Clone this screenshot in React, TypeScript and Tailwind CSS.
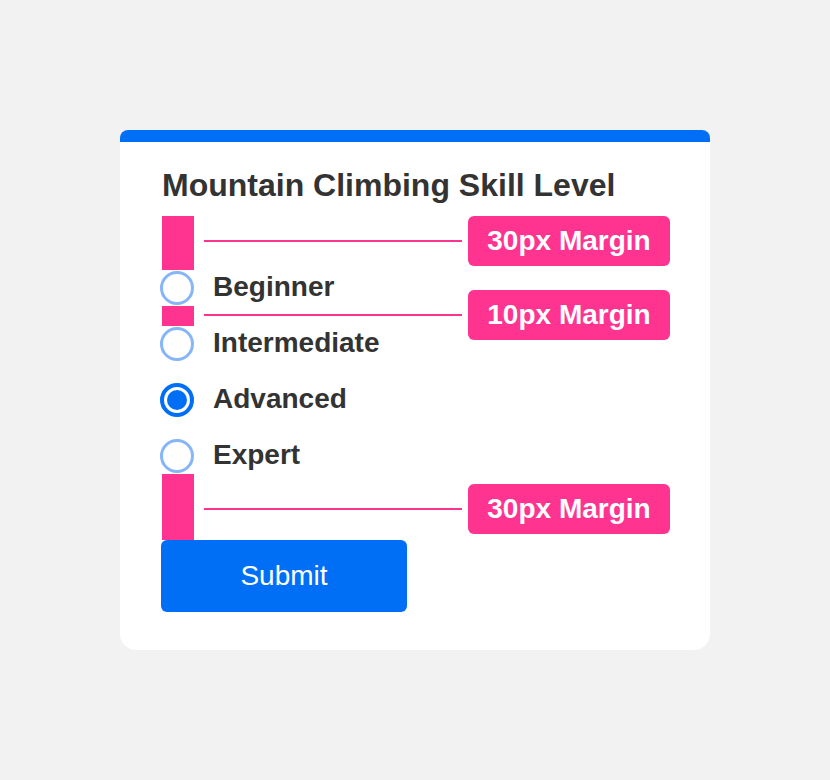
import { useState } from "react";

const levels = ["Beginner", "Intermediate", "Advanced", "Expert"];

/** Pink spacer block with a guide line and a label pill hanging off to the right. */
function Spacer({ h, shift, label }: { h: string; shift: string; label: string }) {
  return (
    <div className="flex items-center">
      <div className={`ml-[2px] w-8 shrink-0 bg-[#ff3390] ${h}`} />
      <div className={`flex h-0 flex-1 items-center ${shift}`}>
        <div className="ml-[10px] h-[2px] flex-1 bg-[#ff3390]" />
        <div className="ml-[6px] flex h-[50px] w-[202px] items-center justify-center rounded-[6px] bg-[#ff3390] text-[28px] font-bold text-white">
          {label}
        </div>
      </div>
    </div>
  );
}

function Radio({ label, checked, onSelect }: { label: string; checked: boolean; onSelect: () => void }) {
  return (
    <label className="flex h-9 cursor-pointer items-center" onClick={onSelect}>
      {checked ? (
        <span className="flex h-[34px] w-[34px] items-center justify-center rounded-full border-[4px] border-[#006ff5]">
          <span className="h-[20px] w-[20px] rounded-full bg-[#006ff5]" />
        </span>
      ) : (
        <span className="h-[34px] w-[34px] rounded-full border-[3px] border-[#86b6f8]" />
      )}
      <span className="ml-[19px] pb-[3px] text-[28px] font-bold leading-[33px] text-[#333]">{label}</span>
    </label>
  );
}

export default function App() {
  const [level, setLevel] = useState("Advanced");

  return (
    <div className="flex min-h-screen items-center justify-center bg-[#f2f2f2] font-['Liberation_Sans',Arial,sans-serif]">
      <div className="w-[590px] overflow-hidden rounded-t-[8px] rounded-b-[16px] bg-white">
        <div className="h-3 bg-[#006ff5]" />
        <div className="flex flex-col px-10 pb-[38px] pt-[25px]">
          <h2 className="mb-[13px] ml-[2px] text-[32px] font-bold leading-[36px] text-[#333]">Mountain Climbing Skill Level</h2>
          <Spacer h="h-[54px]" shift="-translate-y-[2px]" label="30px Margin" />
          <Radio label={levels[0]} checked={level === levels[0]} onSelect={() => setLevel(levels[0])} />
          <Spacer h="h-[20px]" shift="-translate-y-px" label="10px Margin" />
          <div className="flex flex-col gap-5">
            {levels.slice(1).map((l) => (
              <Radio key={l} label={l} checked={level === l} onSelect={() => setLevel(l)} />
            ))}
          </div>
          <Spacer h="h-[66px]" shift="translate-y-[2px]" label="30px Margin" />
          <button className="ml-px h-[72px] w-[246px] rounded-[6px] bg-[#006ff5] text-[28px] text-white">Submit</button>
        </div>
      </div>
    </div>
  );
}
